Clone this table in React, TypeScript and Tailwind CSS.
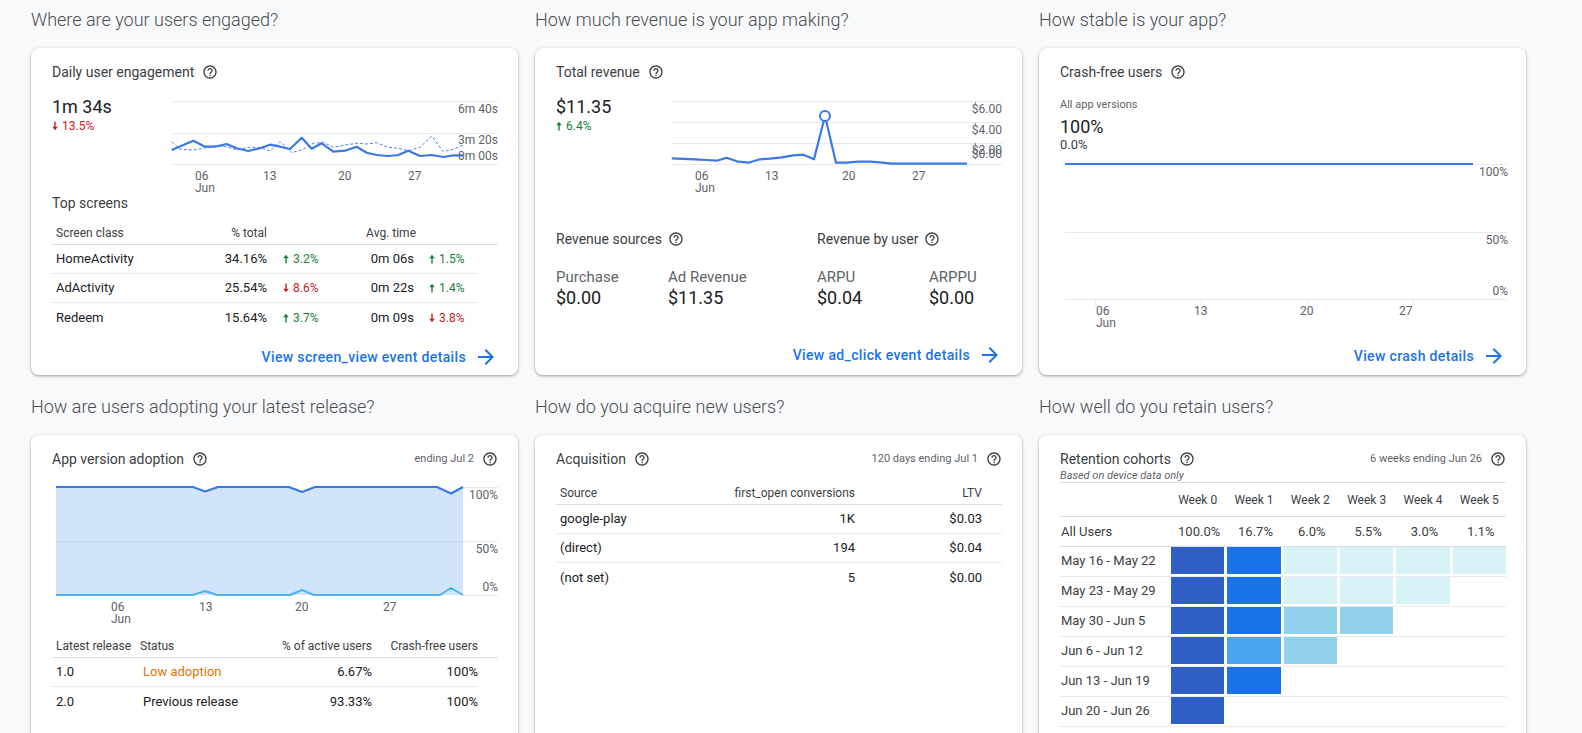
import React from "react";

function Help() {
  return (
    <svg width="16" height="16" viewBox="0 0 24 24" fill="#3c4043" className="shrink-0">
      <path d="M11 18h2v-2h-2v2zm1-16C6.48 2 2 6.48 2 12s4.48 10 10 10 10-4.48 10-10S17.52 2 12 2zm0 18c-4.41 0-8-3.59-8-8s3.59-8 8-8 8 3.59 8 8-3.59 8-8 8zm0-14c-2.21 0-4 1.79-4 4h2c0-1.1.9-2 2-2s2 .9 2 2c0 2-3 1.75-3 5h2c0-2.25 3-2.5 3-5 0-2.21-1.79-4-4-4z" />
    </svg>
  );
}

function ArrowFwd() {
  return (
    <svg width="24" height="24" viewBox="0 0 24 24" fill="#1a73e8" className="shrink-0">
      <path d="M12 4l-1.41 1.41L16.17 11H4v2h12.17l-5.58 5.59L12 20l8-8z" />
    </svg>
  );
}

function SmallArrow({ up, color }: { up: boolean; color: string }) {
  return (
    <svg width="6" height="10" viewBox="0 0 6 10" fill={color} className="shrink-0">
      {up ? (
        <path d="M3 0.8 L5.8 4.2 H3.7 V9.4 H2.3 V4.2 H0.2 Z" />
      ) : (
        <path d="M3 9.2 L5.8 5.8 H3.7 V0.6 H2.3 V5.8 H0.2 Z" />
      )}
    </svg>
  );
}

function Delta({ up, value }: { up: boolean; value: string }) {
  return (
    <span
      className={
        up
          ? "flex items-center gap-[4px] text-[12px] text-[#188038]"
          : "flex items-center gap-[4px] text-[12px] text-[#c5221f]"
      }
    >
      <SmallArrow up={up} color={up ? "#188038" : "#c5221f"} />
      {value}
    </span>
  );
}

function CardTitle({ children, right }: { children: React.ReactNode; right?: string }) {
  return (
    <div className="flex h-[20px] items-center justify-between">
      <div className="flex items-center gap-[8px] text-[14px] text-[#3c4043]">
        <span>{children}</span>
        <Help />
      </div>
      {right ? (
        <div className="flex items-center gap-[8px] text-[11px] text-[#5f6368]">
          <span>{right}</span>
          <Help />
        </div>
      ) : null}
    </div>
  );
}

function CardLink({ children }: { children: React.ReactNode }) {
  return (
    <div className="flex h-[24px] items-center justify-end gap-[8px] text-[14px] font-medium tracking-[0.35px] text-[#1a73e8]">
      <span>{children}</span>
      <ArrowFwd />
    </div>
  );
}

function Section({ title, children }: { title: string; children: React.ReactNode }) {
  return (
    <div className="flex flex-col">
      <div className="h-[24px] whitespace-nowrap text-[18px] font-light leading-[24px] text-[#4a4d51]">{title}</div>
      <div className="mt-[16px]">{children}</div>
    </div>
  );
}

const cardCls =
  "rounded-[8px] bg-white pl-[21px] pr-[20px] pt-[14px] shadow-[0_1px_2px_0_rgba(60,64,67,0.3),0_1px_3px_1px_rgba(60,64,67,0.15)]";

const engSolid =
  "171.7,150 193.3,140.7 205,146.7 215,146.7 226.7,144 236.7,148.3 248.3,151 260,148.3 270,144.7 280,146.7 290,149 301.7,137.7 311.7,148.7 321.7,143.3 333.3,151.7 345,150.7 356.7,146.7 366.7,152.7 376.7,155 388.3,156 398.3,155 408.3,150.7 420,156 431.7,155 443.3,157 453.3,155.3 463.3,155.3";
const engDash =
  "171.7,141.7 180,149.3 193.3,150 203.3,148.3 215,146 226.7,146.7 236.7,150 248.3,147.3 260,147.3 270,151 280,141.7 291.7,152.7 303.3,149.3 313.3,143.3 323.3,142.3 333.3,147.3 345,145 356.7,143.3 366.7,144 376.7,142.7 388.3,147.3 398.3,148.3 408.3,150.7 420,147.3 431.7,136 443.3,151.7 453.3,149.3 463.3,145";
const revLine =
  "671.7,158.3 695,159.3 706.7,160 716.7,160.7 726.7,157.7 736.7,161.3 748.3,162.7 760,159.3 770,158.7 781.7,157.3 793.3,155.3 803.3,154.7 814,159.3 825,116 836,162.7 846.7,162.7 858.3,161.7 870,161.7 880,162.3 891.7,163.7 903.3,163.7 967,163.7";

function EngagementChart() {
  return (
    <svg width="326" height="98" viewBox="172 95 326 98" className="shrink-0 overflow-visible">
      <g stroke="#e8eaed" strokeWidth="1">
        <line x1="172" y1="101.5" x2="498" y2="101.5" />
        <line x1="172" y1="133.5" x2="498" y2="133.5" />
        <line x1="172" y1="164.5" x2="498" y2="164.5" />
      </g>
      <g fill="#5f6368" fontSize="12" fontFamily="Roboto, sans-serif">
        <text x="498" y="113" textAnchor="end">6m 40s</text>
        <text x="498" y="144" textAnchor="end">3m 20s</text>
        <text x="498" y="160" textAnchor="end">0m 00s</text>
        <text x="195" y="180">06</text>
        <text x="195" y="192">Jun</text>
        <text x="263" y="180">13</text>
        <text x="338" y="180">20</text>
        <text x="408" y="180">27</text>
      </g>
      <polyline points={engDash} fill="none" stroke="#4a84e8" strokeWidth="1" strokeDasharray="3 2" />
      <polyline points={engSolid} fill="none" stroke="#3b78e7" strokeWidth="2.2" strokeLinejoin="round" />
    </svg>
  );
}

function RevenueChart() {
  return (
    <svg width="330" height="98" viewBox="672 95 330 98" className="shrink-0 overflow-visible">
      <g stroke="#e8eaed" strokeWidth="1">
        <line x1="672" y1="101.5" x2="1002" y2="101.5" />
        <line x1="672" y1="122.5" x2="1002" y2="122.5" />
        <line x1="672" y1="143.5" x2="1002" y2="143.5" />
        <line x1="672" y1="164.5" x2="1002" y2="164.5" />
      </g>
      <g fill="#5f6368" fontSize="12" fontFamily="Roboto, sans-serif">
        <text x="1002" y="113" textAnchor="end">$6.00</text>
        <text x="1002" y="134" textAnchor="end">$4.00</text>
        <text x="1002" y="153.5" textAnchor="end">$2.00</text>
        <text x="1002" y="157.5" textAnchor="end">$0.00</text>
        <text x="695" y="180">06</text>
        <text x="695" y="192">Jun</text>
        <text x="765" y="180">13</text>
        <text x="842" y="180">20</text>
        <text x="912" y="180">27</text>
      </g>
      <polyline points={revLine} fill="none" stroke="#3b78e7" strokeWidth="2.2" strokeLinejoin="round" />
      <circle cx="825" cy="116" r="5" fill="white" stroke="#3b78e7" strokeWidth="2" />
    </svg>
  );
}

function CrashChart() {
  return (
    <svg width="446" height="176" viewBox="1059 154 446 176" className="shrink-0 overflow-visible">
      <g stroke="#e8eaed" strokeWidth="1">
        <line x1="1064" y1="164.5" x2="1506" y2="164.5" />
        <line x1="1064" y1="232.5" x2="1506" y2="232.5" />
        <line x1="1064" y1="299.5" x2="1506" y2="299.5" />
        <line x1="1094.5" y1="299" x2="1094.5" y2="306" />
        <line x1="1200.5" y1="299" x2="1200.5" y2="306" />
        <line x1="1306.5" y1="299" x2="1306.5" y2="306" />
        <line x1="1412.5" y1="299" x2="1412.5" y2="306" />
      </g>
      <line x1="1064" y1="164" x2="1472" y2="164" stroke="#3b78e7" strokeWidth="2.2" />
      <g fill="#5f6368" fontSize="12" fontFamily="Roboto, sans-serif">
        <text x="1507" y="176" textAnchor="end">100%</text>
        <text x="1507" y="244" textAnchor="end">50%</text>
        <text x="1507" y="295" textAnchor="end">0%</text>
        <text x="1095" y="315">06</text>
        <text x="1095" y="327">Jun</text>
        <text x="1193" y="315">13</text>
        <text x="1299" y="315">20</text>
        <text x="1398" y="315">27</text>
      </g>
    </svg>
  );
}

function AdoptionChart() {
  const top = "56,487 193,487 205,491.5 218,487 289,487 302,492 315,487 437,487 451,493.5 463,487";
  const bottom = "56,595 193,595 205,591 217,595 290,595 302,590 314,595 440,595 451,588 463,595";
  return (
    <svg width="446" height="146" viewBox="52 480 446 146" className="shrink-0 overflow-visible">
      <polygon points={`${top} 463,595 56,595`} fill="#d2e3fc" />
      <g stroke="#e8eaed" strokeWidth="1">
        <line x1="463" y1="487.5" x2="498" y2="487.5" />
        <line x1="463" y1="541.5" x2="498" y2="541.5" />
        <line x1="463" y1="595.5" x2="498" y2="595.5" />
      </g>
      <line x1="56" y1="541.5" x2="463" y2="541.5" stroke="#c4d6f2" strokeWidth="1" />
      <polyline points={top} fill="none" stroke="#3b78e7" strokeWidth="2.2" strokeLinejoin="round" />
      <polyline points={bottom} fill="none" stroke="#4db3ea" strokeWidth="2" strokeLinejoin="round" />
      <g fill="#5f6368" fontSize="12" fontFamily="Roboto, sans-serif">
        <text x="498" y="499" textAnchor="end">100%</text>
        <text x="498" y="553" textAnchor="end">50%</text>
        <text x="498" y="591" textAnchor="end">0%</text>
        <text x="111" y="611">06</text>
        <text x="111" y="623">Jun</text>
        <text x="199" y="611">13</text>
        <text x="295" y="611">20</text>
        <text x="383" y="611">27</text>
      </g>
    </svg>
  );
}

const screens = [
  { name: "HomeActivity", pct: "34.16%", d1: { up: true, v: "3.2%" }, time: "0m 06s", d2: { up: true, v: "1.5%" } },
  { name: "AdActivity", pct: "25.54%", d1: { up: false, v: "8.6%" }, time: "0m 22s", d2: { up: true, v: "1.4%" } },
  { name: "Redeem", pct: "15.64%", d1: { up: true, v: "3.7%" }, time: "0m 09s", d2: { up: false, v: "3.8%" } },
];

function EngagementCard() {
  return (
    <div className={`${cardCls} h-[327px] flex flex-col`}>
      <CardTitle>Daily user engagement</CardTitle>
      <div className="mt-[13px] flex">
        <div className="w-[120px] shrink-0">
          <div className="text-[18px] leading-[24px] text-[#202124]">1m 34s</div>
          <div className="h-[14px] flex items-center">
            <Delta up={false} value="13.5%" />
          </div>
        </div>
        <EngagementChart />
      </div>
      <div className="text-[14px] leading-[20px] text-[#3c4043]">Top screens</div>
      <div className="mt-[9px] flex h-[23px] items-center border-b border-[#dadce0] text-[12px] text-[#3c4043]">
        <div className="w-[149px] shrink-0 pl-[4px]">Screen class</div>
        <div className="w-[66px] shrink-0 text-right">% total</div>
        <div className="w-[56px] shrink-0" />
        <div className="w-[93px] shrink-0 text-right">Avg. time</div>
      </div>
      {screens.map((r, i) => (
        <div
          key={r.name}
          className={
            i < 2
              ? "flex h-[29px] w-[426px] items-center border-b border-[#e8eaed] text-[13px] text-[#202124]"
              : "flex h-[29px] w-[426px] items-center text-[13px] text-[#202124]"
          }
        >
          <div className="w-[149px] shrink-0 pl-[4px]">{r.name}</div>
          <div className="w-[66px] shrink-0 text-right">{r.pct}</div>
          <div className="w-[56px] shrink-0 pl-[16px]">
            <Delta up={r.d1.up} value={r.d1.v} />
          </div>
          <div className="w-[91px] shrink-0 text-right">{r.time}</div>
          <div className="w-[64px] shrink-0 pl-[15px]">
            <Delta up={r.d2.up} value={r.d2.v} />
          </div>
        </div>
      ))}
      <div className="mt-[13px]">
        <CardLink>View screen_view event details</CardLink>
      </div>
    </div>
  );
}

function Stat({ label, value }: { label: string; value: string }) {
  return (
    <div className="w-[112px] shrink-0">
      <div className="text-[15px] leading-[20px] text-[#5f6368]">{label}</div>
      <div className="text-[18px] leading-[22px] text-[#202124]">{value}</div>
    </div>
  );
}

function RevenueCard() {
  return (
    <div className={`${cardCls} h-[327px] flex flex-col`}>
      <CardTitle>Total revenue</CardTitle>
      <div className="mt-[13px] flex">
        <div className="w-[116px] shrink-0">
          <div className="text-[18px] leading-[24px] text-[#202124]">$11.35</div>
          <div className="h-[14px] flex items-center">
            <Delta up={true} value="6.4%" />
          </div>
        </div>
        <RevenueChart />
      </div>
      <div className="mt-[36px] flex">
        <div className="w-[261px] shrink-0">
          <div className="flex h-[20px] items-center gap-[6px] text-[14px] text-[#3c4043]">
            <span>Revenue sources</span>
            <Help />
          </div>
          <div className="mt-[18px] flex">
            <Stat label="Purchase" value="$0.00" />
            <Stat label="Ad Revenue" value="$11.35" />
          </div>
        </div>
        <div className="w-[185px] shrink-0">
          <div className="flex h-[20px] items-center gap-[6px] text-[14px] text-[#3c4043]">
            <span>Revenue by user</span>
            <Help />
          </div>
          <div className="mt-[18px] flex">
            <Stat label="ARPU" value="$0.04" />
            <Stat label="ARPPU" value="$0.00" />
          </div>
        </div>
      </div>
      <div className="mt-[34px]">
        <CardLink>View ad_click event details</CardLink>
      </div>
    </div>
  );
}

function CrashCard() {
  return (
    <div className={`${cardCls} h-[327px] flex flex-col`}>
      <CardTitle>Crash-free users</CardTitle>
      <div className="mt-[16px] text-[11px] leading-[14px] text-[#5f6368]">All app versions</div>
      <div className="mt-[5px] text-[18px] leading-[20px] text-[#202124]">100%</div>
      <div className="text-[13px] leading-[16px] text-[#3c4043]">0.0%</div>
      <div className="mt-[1px]">
        <CrashChart />
      </div>
      <div className="mt-[14px]">
        <CardLink>View crash details</CardLink>
      </div>
    </div>
  );
}

function AdoptionCard() {
  const rows = [
    { v: "1.0", s: "Low adoption", p: "6.67%", c: "100%", low: true },
    { v: "2.0", s: "Previous release", p: "93.33%", c: "100%", low: false },
  ];
  return (
    <div className={`${cardCls} h-[310px] flex flex-col`}>
      <CardTitle right="ending Jul 2">App version adoption</CardTitle>
      <div className="mt-[11px]">
        <AdoptionChart />
      </div>
      <div className="mt-[9px] flex h-[23px] items-center border-b border-[#dadce0] text-[12px] text-[#3c4043]">
        <div className="w-[88px] shrink-0 pl-[4px]">Latest release</div>
        <div className="w-[110px] shrink-0">Status</div>
        <div className="w-[122px] shrink-0 text-right">% of active users</div>
        <div className="w-[106px] shrink-0 text-right">Crash-free users</div>
      </div>
      {rows.map((r, i) => (
        <div
          key={r.v}
          className={
            i === 0
              ? "flex h-[29px] w-[426px] items-center border-b border-[#e8eaed] text-[13px] text-[#202124]"
              : "flex h-[29px] w-[426px] items-center text-[13px] text-[#202124]"
          }
        >
          <div className="w-[88px] shrink-0 pl-[4px]">{r.v}</div>
          <div className={r.low ? "w-[110px] shrink-0 pl-[3px] text-[#e37400]" : "w-[110px] shrink-0 pl-[3px]"}>{r.s}</div>
          <div className="w-[122px] shrink-0 text-right">{r.p}</div>
          <div className="w-[106px] shrink-0 text-right">{r.c}</div>
        </div>
      ))}
    </div>
  );
}

function AcquisitionCard() {
  const rows = [
    ["google-play", "1K", "$0.03"],
    ["(direct)", "194", "$0.04"],
    ["(not set)", "5", "$0.00"],
  ];
  return (
    <div className={`${cardCls} h-[310px] flex flex-col`}>
      <CardTitle right="120 days ending Jul 1">Acquisition</CardTitle>
      <div className="mt-[13px] flex h-[23px] items-center border-b border-[#dadce0] text-[12px] text-[#3c4043]">
        <div className="w-[139px] shrink-0 pl-[4px]">Source</div>
        <div className="w-[160px] shrink-0 whitespace-nowrap text-right">first_open conversions</div>
        <div className="w-[127px] shrink-0 text-right">LTV</div>
      </div>
      {rows.map((r, i) => (
        <div
          key={r[0]}
          className={
            i < 2
              ? "flex h-[29px] items-center border-b border-[#e8eaed] text-[13px] text-[#202124]"
              : "flex h-[29px] items-center text-[13px] text-[#202124]"
          }
        >
          <div className="w-[139px] shrink-0 pl-[4px]">{r[0]}</div>
          <div className="w-[160px] shrink-0 text-right">{r[1]}</div>
          <div className="w-[127px] shrink-0 text-right">{r[2]}</div>
        </div>
      ))}
    </div>
  );
}

const D = "bg-[#2f5ec4]";
const B = "bg-[#1a73e8]";
const L = "bg-[#d7f3f8]";
const M = "bg-[#92d1ec]";
const S = "bg-[#4aa6f0]";

const cohorts: { label: string; cells: string[] }[] = [
  { label: "May 16 - May 22", cells: [D, B, L, L, L, L] },
  { label: "May 23 - May 29", cells: [D, B, L, L, L] },
  { label: "May 30 - Jun 5", cells: [D, B, M, M] },
  { label: "Jun 6 - Jun 12", cells: [D, S, M] },
  { label: "Jun 13 - Jun 19", cells: [D, B] },
  { label: "Jun 20 - Jun 26", cells: [D] },
];

function RetentionCard() {
  const weeks = ["Week 0", "Week 1", "Week 2", "Week 3", "Week 4", "Week 5"];
  const all = ["100.0%", "16.7%", "6.0%", "5.5%", "3.0%", "1.1%"];
  return (
    <div className={`${cardCls} h-[310px] flex flex-col`}>
      <div className="border-b border-[#dadce0]">
        <CardTitle right="6 weeks ending Jun 26">Retention cohorts</CardTitle>
        <div className="text-[11px] italic leading-[13px] text-[#5f6368]">Based on device data only</div>
      </div>
      <div className="grid h-[34px] grid-cols-[108px_repeat(6,minmax(0,1fr))] items-center gap-x-[3px] border-b border-[#dadce0] text-[12px] text-[#3c4043]">
        <div />
        {weeks.map((w) => (
          <div key={w} className="text-center">
            {w}
          </div>
        ))}
      </div>
      <div className="grid h-[30px] grid-cols-[108px_repeat(6,minmax(0,1fr))] items-center gap-x-[3px] border-b border-[#dadce0] text-[13px] text-[#3c4043]">
        <div className="pl-[1px]">All Users</div>
        {all.map((w, i) => (
          <div key={i} className="pl-[3px] text-center">
            {w}
          </div>
        ))}
      </div>
      {cohorts.map((c) => (
        <div
          key={c.label}
          className="grid h-[30px] grid-cols-[108px_repeat(6,minmax(0,1fr))] items-start gap-x-[3px] border-b border-[#e8eaed]"
        >
          <div className="flex h-[27px] items-center pl-[1px] text-[13px] text-[#3c4043]">{c.label}</div>
          {c.cells.map((cls, i) => (
            <div key={i} className={`h-[27px] ${cls}`} />
          ))}
        </div>
      ))}
    </div>
  );
}

export default function App() {
  return (
    <div className="h-[733px] w-full overflow-hidden bg-[#f8f9fa] pl-[31px] pt-[8px] font-['Roboto',sans-serif]">
      <div className="grid grid-cols-[487px_487px_487px] gap-x-[17px]">
        <Section title="Where are your users engaged?">
          <EngagementCard />
        </Section>
        <Section title="How much revenue is your app making?">
          <RevenueCard />
        </Section>
        <Section title="How stable is your app?">
          <CrashCard />
        </Section>
      </div>
      <div className="mt-[20px] grid grid-cols-[487px_487px_487px] gap-x-[17px]">
        <Section title="How are users adopting your latest release?">
          <AdoptionCard />
        </Section>
        <Section title="How do you acquire new users?">
          <AcquisitionCard />
        </Section>
        <Section title="How well do you retain users?">
          <RetentionCard />
        </Section>
      </div>
    </div>
  );
}
